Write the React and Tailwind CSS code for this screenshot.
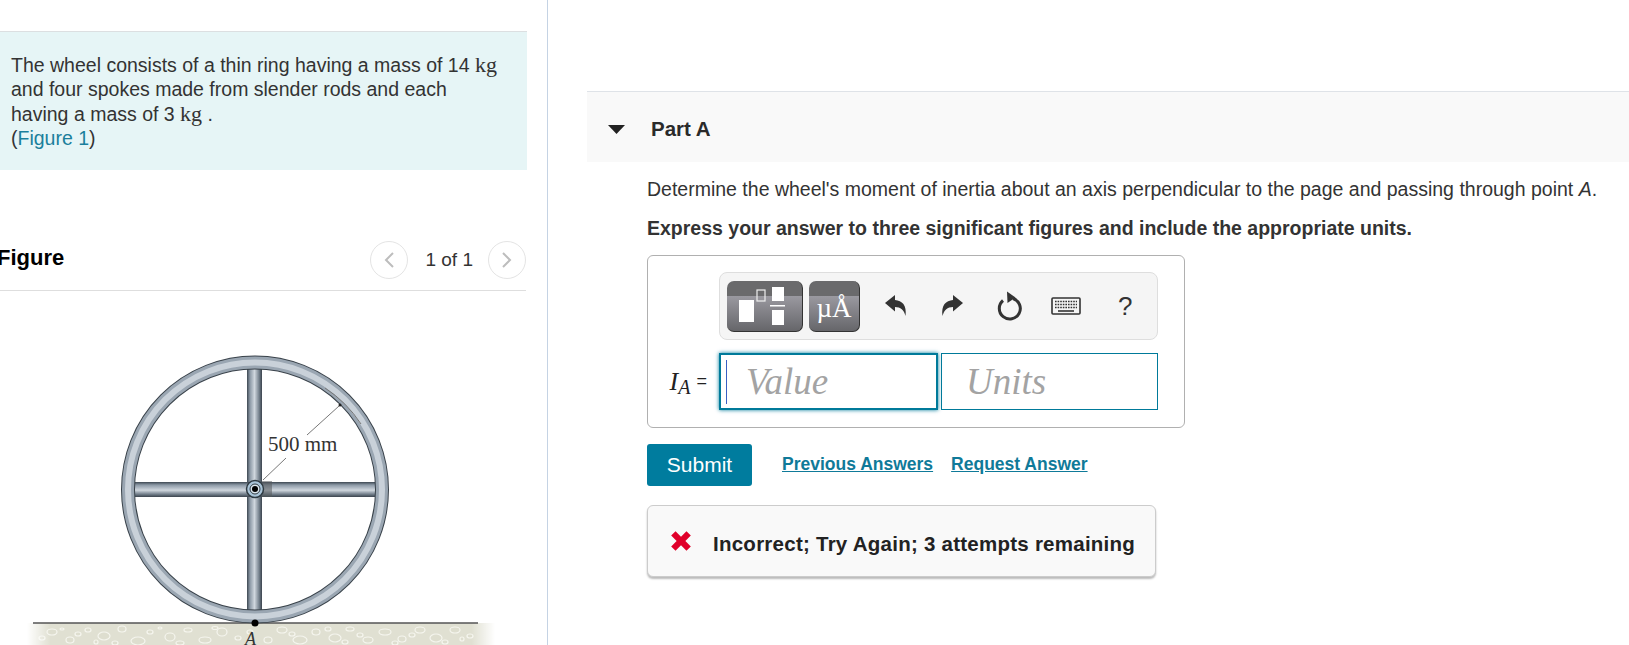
const sans = { fontFamily: '"Liberation Sans", Arial, sans-serif' };
const serif = { fontFamily: '"Liberation Serif", serif' };

const pebbles = [
  [52, 632, 5, 3], [70, 640, 4, 3], [88, 630, 3, 2], [104, 636, 6, 4], [122, 629, 4, 3], [138, 641, 7, 4],
  [150, 632, 3, 2], [170, 637, 5, 4], [188, 630, 4, 2], [205, 640, 6, 3], [222, 632, 5, 4], [238, 638, 3, 2],
  [282, 630, 5, 3], [300, 640, 7, 4], [316, 632, 4, 3], [335, 638, 6, 4], [350, 629, 4, 2], [368, 640, 5, 3],
  [385, 632, 6, 3], [402, 639, 4, 3], [420, 630, 5, 3], [436, 638, 6, 4], [455, 630, 5, 3], [470, 636, 3, 2],
  [62, 629, 2, 1], [96, 642, 2, 2], [160, 628, 2, 1], [250, 632, 3, 2], [268, 640, 4, 3], [345, 642, 3, 2],
  [78, 634, 3, 2], [115, 643, 3, 2], [180, 643, 4, 2], [215, 628, 3, 1.5], [292, 634, 3, 2], [328, 629, 3, 2],
  [360, 635, 3, 2], [395, 643, 3, 2], [412, 635, 3, 2], [445, 642, 3, 2], [462, 639, 2, 2], [42, 638, 3, 2],
];

function Wheel() {
  return (
    <svg viewBox="0 291 527 354" className="w-[527px] h-[354px] block">
      <defs>
        <linearGradient id="spokeV" x1="0" x2="1" y1="0" y2="0">
          <stop offset="0" stopColor="#3d4750" />
          <stop offset="0.2" stopColor="#8c99a6" />
          <stop offset="0.5" stopColor="#d0d7de" />
          <stop offset="0.8" stopColor="#77838f" />
          <stop offset="1" stopColor="#3a444d" />
        </linearGradient>
        <linearGradient id="spokeH" x1="0" x2="0" y1="0" y2="1">
          <stop offset="0" stopColor="#3d4750" />
          <stop offset="0.2" stopColor="#8c99a6" />
          <stop offset="0.55" stopColor="#d0d7de" />
          <stop offset="0.8" stopColor="#77838f" />
          <stop offset="1" stopColor="#3a444d" />
        </linearGradient>
        <linearGradient id="fade" x1="0" x2="1" y1="0" y2="0">
          <stop offset="0" stopColor="#fff" stopOpacity="1" />
          <stop offset="0.05" stopColor="#fff" stopOpacity="0" />
          <stop offset="0.95" stopColor="#fff" stopOpacity="0" />
          <stop offset="1" stopColor="#fff" stopOpacity="1" />
        </linearGradient>
        <filter id="soft"><feGaussianBlur stdDeviation="0.55" /></filter>
      </defs>
      <g filter="url(#soft)">
        {/* ground */}
        <rect x="27" y="623" width="468" height="22" fill="#e0e0d2" />
        {pebbles.map(([cx, cy, rx, ry], i) => (
          <ellipse key={i} cx={cx} cy={cy} rx={rx} ry={ry} fill="#dedecf" stroke="#f5f5ee" strokeWidth="1.2" />
        ))}
        <rect x="27" y="623" width="468" height="22" fill="url(#fade)" />
        <line x1="33" x2="478" y1="623" y2="623" stroke="#555" strokeWidth="1.5" />

        {/* spokes */}
        <rect x="247" y="368" width="15" height="244" fill="url(#spokeV)" />
        <rect x="135" y="482" width="240" height="15" fill="url(#spokeH)" />
        <rect x="262" y="481" width="10" height="16" fill="#55595c" opacity="0.55" />

        {/* ring */}
        <circle cx="255" cy="489.5" r="127" fill="none" stroke="#39424a" strokeWidth="14" />
        <circle cx="255" cy="489.5" r="127" fill="none" stroke="#9aa6b2" strokeWidth="12" />
        <circle cx="255" cy="489.5" r="127" fill="none" stroke="#c9d1d9" strokeWidth="6" />
        <path d="M325 388 A123 123 0 0 1 361 424" fill="none" stroke="#777" strokeWidth="1" />

        {/* hub */}
        <circle cx="255" cy="489" r="8.5" fill="#a9c4d8" stroke="#2f3a42" strokeWidth="1.5" />
        <circle cx="255" cy="489" r="5" fill="#dbe6ee" stroke="#2f3a42" strokeWidth="1" />
        <circle cx="255" cy="489" r="3" fill="#000" />

        {/* dimension */}
        <line x1="263" y1="480" x2="286" y2="458" stroke="#777" strokeWidth="1" />
        <line x1="307" y1="435" x2="339" y2="406" stroke="#777" strokeWidth="1" />
        <circle cx="340" cy="405" r="1.5" fill="#222" />

        <circle cx="255" cy="623" r="3.5" fill="#000" />
      </g>
      <text x="268" y="451" fontSize="21" fill="#333" style={serif}>500 mm</text>
      <text x="245" y="645" fontSize="18" fontStyle="italic" fill="#333" style={serif}>A</text>
    </svg>
  );
}

function Chevron({ dir }) {
  return (
    <svg width="12" height="18" viewBox="0 0 12 18" fill="none" stroke="#bdbdbd" strokeWidth="2">
      <path d={dir === 'left' ? 'M10 2 L3 9 L10 16' : 'M2 2 L9 9 L2 16'} />
    </svg>
  );
}

function Kg() {
  return <span className="text-[22px]" style={serif}>kg</span>;
}

function Toolbar() {
  const barBtn = 'h-[51px] rounded-[7px] border-b border-r border-[#333] bg-[linear-gradient(to_bottom,#6a6a6c_0,#6a6a6c_30%,#9a99a0_30%,#66666a_100%)]';
  return (
    <div className="flex items-center h-[68px] border border-[#dedede] rounded-[8px] bg-[#f5f5f5] pl-[7px]">
      <div className={`${barBtn} w-[76px]`}>
        <svg width="75" height="50" viewBox="0 0 75 50">
          <rect x="12" y="19" width="15" height="22" fill="#fff" />
          <rect x="30" y="9" width="8" height="11" fill="none" stroke="#eee" strokeWidth="1.2" />
          <rect x="45" y="6" width="12" height="14" fill="#fff" />
          <rect x="43" y="24" width="15" height="1.5" fill="#fff" />
          <rect x="45" y="29" width="12" height="15" fill="#fff" />
        </svg>
      </div>
      <div className={`${barBtn} w-[51px] ml-[6px] text-white text-center pt-[6px] text-[27px] leading-[42px]`} style={serif}>
        µÅ
      </div>
      {/* undo */}
      <svg className="ml-[24px]" width="24" height="26" viewBox="0 0 24 26" fill="#333">
        <path d="M1 10 L11 2 V7 C18 7.5 23 12 21.5 23 C20 17 16.5 14 11 14 V18.5 Z" />
      </svg>
      {/* redo */}
      <svg className="ml-[32px]" width="24" height="26" viewBox="0 0 24 26" fill="#333">
        <path d="M23 10 L13 2 V7 C6 7.5 1 12 2.5 23 C4 17 7.5 14 13 14 V18.5 Z" />
      </svg>
      {/* reset */}
      <svg className="ml-[33px]" width="26" height="30" viewBox="0 0 26 30" fill="none" stroke="#333" strokeWidth="3">
        <path d="M6 9.5 A10.5 10.5 0 1 0 16 7.5" />
        <path d="M10 0.5 L18.5 6.5 L10.5 12 Z" fill="#333" stroke="none" />
      </svg>
      {/* keyboard */}
      <svg className="ml-[28px]" width="30" height="18" viewBox="0 0 30 18" fill="none">
        <rect x="1" y="1" width="28" height="16" rx="1" stroke="#333" strokeWidth="1.6" />
        <path d="M4 4.5 H26 M4 7.5 H26 M4 10.5 H26" stroke="#333" strokeWidth="1.6" strokeDasharray="1.6 1" />
        <path d="M7 14 H23" stroke="#333" strokeWidth="1.6" />
      </svg>
      <span className="ml-[37px] text-[26px] text-[#333]" style={sans}>?</span>
    </div>
  );
}

export default function App() {
  return (
    <div className="flex w-[1629px] h-[645px] overflow-hidden bg-white text-[#333]" style={sans}>
      {/* Left column */}
      <div className="w-[548px] shrink-0 border-r border-[#c5d3e4] pt-[31px]">
        <div className="w-[527px] h-[139px] bg-[#e6f5f6] border-t border-[#dcdfe1] pt-[21px] pl-[11px] text-[19.5px] leading-[24.4px]">
          <div>The wheel consists of a thin ring having a mass of 14 <Kg /></div>
          <div>and four spokes made from slender rods and each</div>
          <div>having a mass of 3 <Kg /> .</div>
          <div>(<a className="text-[#1a7f9c]">Figure 1</a>)</div>
        </div>
        <div className="w-[526px] h-[121px] border-b border-[#dedede] flex items-end pb-[11px]">
          <h2 className="-ml-[3px] font-bold text-[22px] text-black leading-[26px] mb-[8px]">Figure</h2>
          <div className="ml-auto flex items-center">
            <span className="w-[38px] h-[38px] rounded-full border border-[#e4e4e4] flex items-center justify-center"><Chevron dir="left" /></span>
            <span className="ml-[17px] text-[19px]">1 of 1</span>
            <span className="ml-[15px] w-[38px] h-[38px] rounded-full border border-[#e4e4e4] flex items-center justify-center"><Chevron dir="right" /></span>
          </div>
        </div>
        <Wheel />
      </div>

      {/* Right column */}
      <div className="flex-1 pt-[91px] pl-[39px]">
        <div className="h-[71px] bg-[#f9f9f9] border-t border-[#dfe3e8] flex items-center pl-[21px] pt-[5px]">
          <svg width="17" height="9" viewBox="0 0 17 9"><path d="M0 0 H17 L8.5 9 Z" fill="#222" /></svg>
          <span className="ml-[26px] font-bold text-[20.5px] text-[#2a2a2a]">Part A</span>
        </div>

        <div className="pl-[60px]">
          <p className="mt-[15px] text-[19.5px] leading-[24px] whitespace-nowrap">
            Determine the wheel's moment of inertia about an axis perpendicular to the page and passing through point <i>A</i>.
          </p>
          <p className="mt-[15px] font-bold text-[19.5px] leading-[24px] whitespace-nowrap">
            Express your answer to three significant figures and include the appropriate units.
          </p>

          <div className="mt-[15px] w-[538px] h-[173px] border border-[#b0b0b0] rounded-[6px] pt-[16px] pr-[26px]">
            <div className="ml-[71px]"><Toolbar /></div>
            <div className="flex mt-[13px] items-stretch h-[57px]">
              <div className="w-[71px] shrink-0 flex items-center justify-end pr-[12px] text-[#222]" style={serif}>
                <i className="text-[26px]">I</i>
                <i className="text-[20px] mt-[11px]">A</i>
                <span className="ml-[6px] text-[18px]" style={sans}>=</span>
              </div>
              <div className="w-[219px] border-2 border-[#007a9a] shadow-[0_0_4px_#007a9a] flex items-center pl-[5px]">
                <span className="w-px h-[44px] bg-[#3b5fc4]" />
                <span className="ml-[19px] text-[37px] italic text-[#a3a3a3]" style={serif}>Value</span>
              </div>
              <div className="ml-[3px] w-[217px] border border-[#007a9a] flex items-center pl-[24px]">
                <span className="text-[37px] italic text-[#a3a3a3]" style={serif}>Units</span>
              </div>
            </div>
          </div>

          <div className="mt-[16px] flex items-start">
            <button className="w-[105px] h-[42px] bg-[#007c9e] rounded-[3px] text-white text-[21px]">Submit</button>
            <a className="ml-[30px] mt-[7px] font-bold text-[17.5px] text-[#0f7a99] underline">Previous Answers</a>
            <a className="ml-[18px] mt-[7px] font-bold text-[17.5px] text-[#0f7a99] underline">Request Answer</a>
          </div>

          <div className="mt-[19px] w-[509px] h-[72px] bg-[#f9f9f9] border border-[#cccccc] rounded-[6px] shadow-[0_2px_2px_#bbb] flex items-center pl-[21px]">
            <svg width="24" height="24" viewBox="0 0 22 22"><path d="M2 6 L6 2 L11 7 L16 2 L20 6 L15 11 L20 16 L16 20 L11 15 L6 20 L2 16 L7 11 Z" fill="#e0002a" /></svg>
            <span className="ml-[20px] mt-[6px] font-bold text-[20.5px] text-[#222] tracking-[0.25px]">Incorrect; Try Again; 3 attempts remaining</span>
          </div>
        </div>
      </div>
    </div>
  );
}
